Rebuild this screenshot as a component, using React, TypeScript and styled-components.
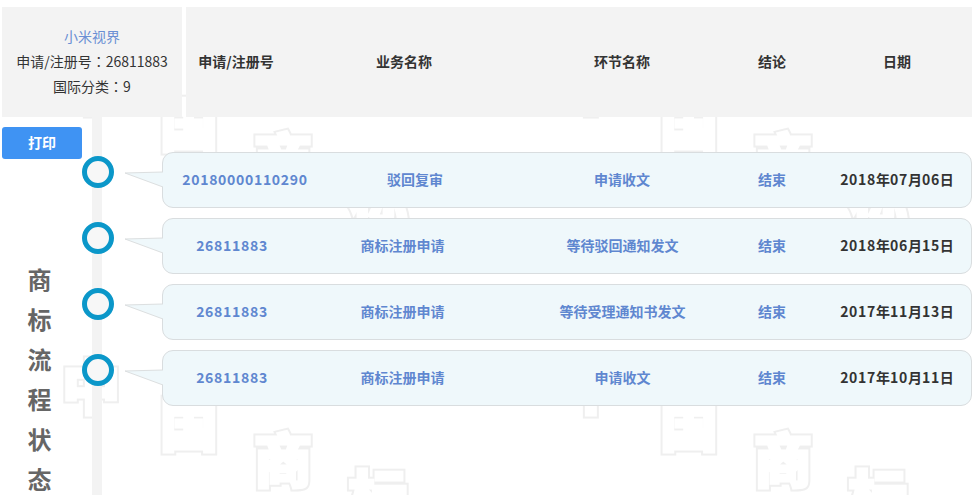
import React from "react";
import styled, { createGlobalStyle } from "styled-components";

const Global = createGlobalStyle`
  html, body { margin: 0; padding: 0; background: #fff; }
  body { font-family: "Noto Sans CJK SC", "Liberation Sans", sans-serif; font-size: 14px; color: #333; }
  * { box-sizing: border-box; }
`;

const Page = styled.div`
  position: relative;
  width: 975px;
  height: 495px;
  overflow: hidden;
  isolation: isolate;
`;

const Watermark = styled.div`
  position: absolute;
  inset: 0;
  z-index: -1;
  display: grid;
  grid-template-columns: repeat(2, 500px);
  grid-auto-rows: 300px;
`;

const WatermarkTile = styled.div`
  position: relative;
`;

const WatermarkChar = styled.span<{ $x: number; $y: number }>`
  position: absolute;
  left: ${(p) => p.$x}px;
  top: ${(p) => p.$y}px;
  font-size: 58px;
  line-height: 58px;
  font-weight: 900;
  color: #efefef;
  -webkit-text-stroke: 7px #efefef;

  &::after {
    content: attr(data-c);
    position: absolute;
    left: 0;
    top: 0;
    color: #fff;
    -webkit-text-stroke: 3px #fff;
  }
`;

const Header = styled.header`
  display: flex;
  gap: 4px;
  padding: 7px 3px 0 2px;
  height: 117px;
`;

const InfoPanel = styled.div`
  width: 180px;
  background: #f3f3f3;
  display: flex;
  flex-direction: column;
  justify-content: center;
  align-items: center;
  padding-bottom: 1px;
  line-height: 25px;
  white-space: nowrap;
`;

const BrandLink = styled.span`
  color: #6a8fd4;
`;

const Colon = styled.span`
  font-family: "Noto Sans CJK TC", sans-serif;
`;

const HeaderTable = styled.div`
  flex: 1;
  background: #f3f3f3;
  display: grid;
  grid-template-columns: 100px 236px 200px 100px 150px;
  align-items: center;
  text-align: center;
  font-weight: 700;
  padding-bottom: 2px;
`;

const Main = styled.main`
  display: flex;
  height: 378px;
  padding: 10px 0 0 2px;
`;

const Side = styled.aside`
  width: 80px;
  display: flex;
  flex-direction: column;
`;

const PrintButton = styled.button`
  flex: none;
  width: 80px;
  height: 32px;
  border: 0;
  border-radius: 3px;
  background: #3f93f3;
  color: #fff;
  font: 700 14px "Noto Sans CJK SC", sans-serif;
  padding: 0 0 2px;
`;

const VerticalTitle = styled.h2`
  flex: none;
  margin: 100px 0 0;
  padding: 0;
  width: 75px;
  text-align: center;
  font-size: 24px;
  line-height: 40px;
  font-weight: 700;
  color: #666;
`;

const Timeline = styled.section`
  position: relative;
  flex: 1;
  min-width: 0;
  margin-top: -10px;
  padding-top: 35px;
  display: flex;
  flex-direction: column;
  gap: 10px;

  &::before {
    content: "";
    position: absolute;
    left: 10px;
    top: 0;
    bottom: 0;
    width: 10px;
    background: #f3f3f3;
  }
`;

const Row = styled.div`
  position: relative;
  display: flex;
  height: 56px;
  padding-right: 3px;
`;

const Dot = styled.span`
  position: relative;
  width: 32px;
  height: 32px;
  margin-top: 4px;
  border-radius: 50%;
  border: 5.5px solid #0b97c9;
  background: #f7f7f7;
  flex: none;
`;

const Tail = styled.svg`
  position: absolute;
  left: 42px;
  top: 16px;
  width: 40px;
  height: 24px;
  z-index: 1;
`;

const Card = styled.div<{ $columns: string }>`
  margin-left: 48px;
  flex: 1;
  min-width: 0;
  display: grid;
  grid-template-columns: ${(p) => p.$columns};
  align-items: center;
  text-align: center;
  background: #eff8fb;
  border: 1px solid #d9dddf;
  border-radius: 11px;
  padding-bottom: 2px;
  font-weight: 700;
  color: #5f87d0;
`;

const DateCell = styled.span`
  color: #333;
  padding-left: 20px;
`;

const Num = styled.span`
  letter-spacing: 0.7px;
`;

const Cell = styled.span``;

const withDigits = (s: string) =>
  s.split(/(\d+)/).map((part, i) => (/^\d+$/.test(part) ? <Num key={i}>{part}</Num> : part));

const rows = [
  { columns: "164px 176px 238px 62px 168px", cells: ["20180000110290", "驳回复审", "申请收文", "结束", "2018年07月06日"] },
  { columns: "138px 203px 237px 62px 168px", cells: ["26811883", "商标注册申请", "等待驳回通知发文", "结束", "2018年06月15日"] },
  { columns: "138px 203px 237px 62px 168px", cells: ["26811883", "商标注册申请", "等待受理通知书发文", "结束", "2017年11月13日"] },
  { columns: "138px 203px 237px 62px 168px", cells: ["26811883", "商标注册申请", "申请收文", "结束", "2017年10月11日"] },
];

const marks: [string, number, number][] = [
  ["中", 62, 55],
  ["国", 160, 92],
  ["商", 254, 128],
  ["标", 349, 165],
];

export default function App() {
  return (
    <Page>
      <Global />
      <Watermark aria-hidden>
        {[0, 1, 2, 3].map((t) => (
          <WatermarkTile key={t}>
            {marks.map(([c, x, y]) => (
              <WatermarkChar key={c} $x={x} $y={y} data-c={c}>
                {c}
              </WatermarkChar>
            ))}
          </WatermarkTile>
        ))}
      </Watermark>
      <Header>
        <InfoPanel>
          <BrandLink>小米视界</BrandLink>
          <span>申请/注册号<Colon>：</Colon>26811883</span>
          <span>国际分类<Colon>：</Colon>9</span>
        </InfoPanel>
        <HeaderTable>
          <span>申请/注册号</span>
          <span>业务名称</span>
          <span>环节名称</span>
          <span>结论</span>
          <span>日期</span>
        </HeaderTable>
      </Header>
      <Main>
        <Side>
          <PrintButton>打印</PrintButton>
          <VerticalTitle>
            商<br />标<br />流<br />程<br />状<br />态
          </VerticalTitle>
        </Side>
        <Timeline>
          {rows.map((r, i) => (
            <Row key={i}>
              <Dot />
              <Tail viewBox="0 0 40 24">
                <polygon points="1,5 39,4 39,19" fill="#eff8fb" />
                <polyline points="39,4 1,5 39,19" fill="none" stroke="#dcdfe0" strokeWidth="1" />
              </Tail>
              <Card $columns={r.columns}>
                <Cell>{withDigits(r.cells[0])}</Cell>
                <Cell>{r.cells[1]}</Cell>
                <Cell>{r.cells[2]}</Cell>
                <Cell>{r.cells[3]}</Cell>
                <DateCell>{withDigits(r.cells[4])}</DateCell>
              </Card>
            </Row>
          ))}
        </Timeline>
      </Main>
    </Page>
  );
}
